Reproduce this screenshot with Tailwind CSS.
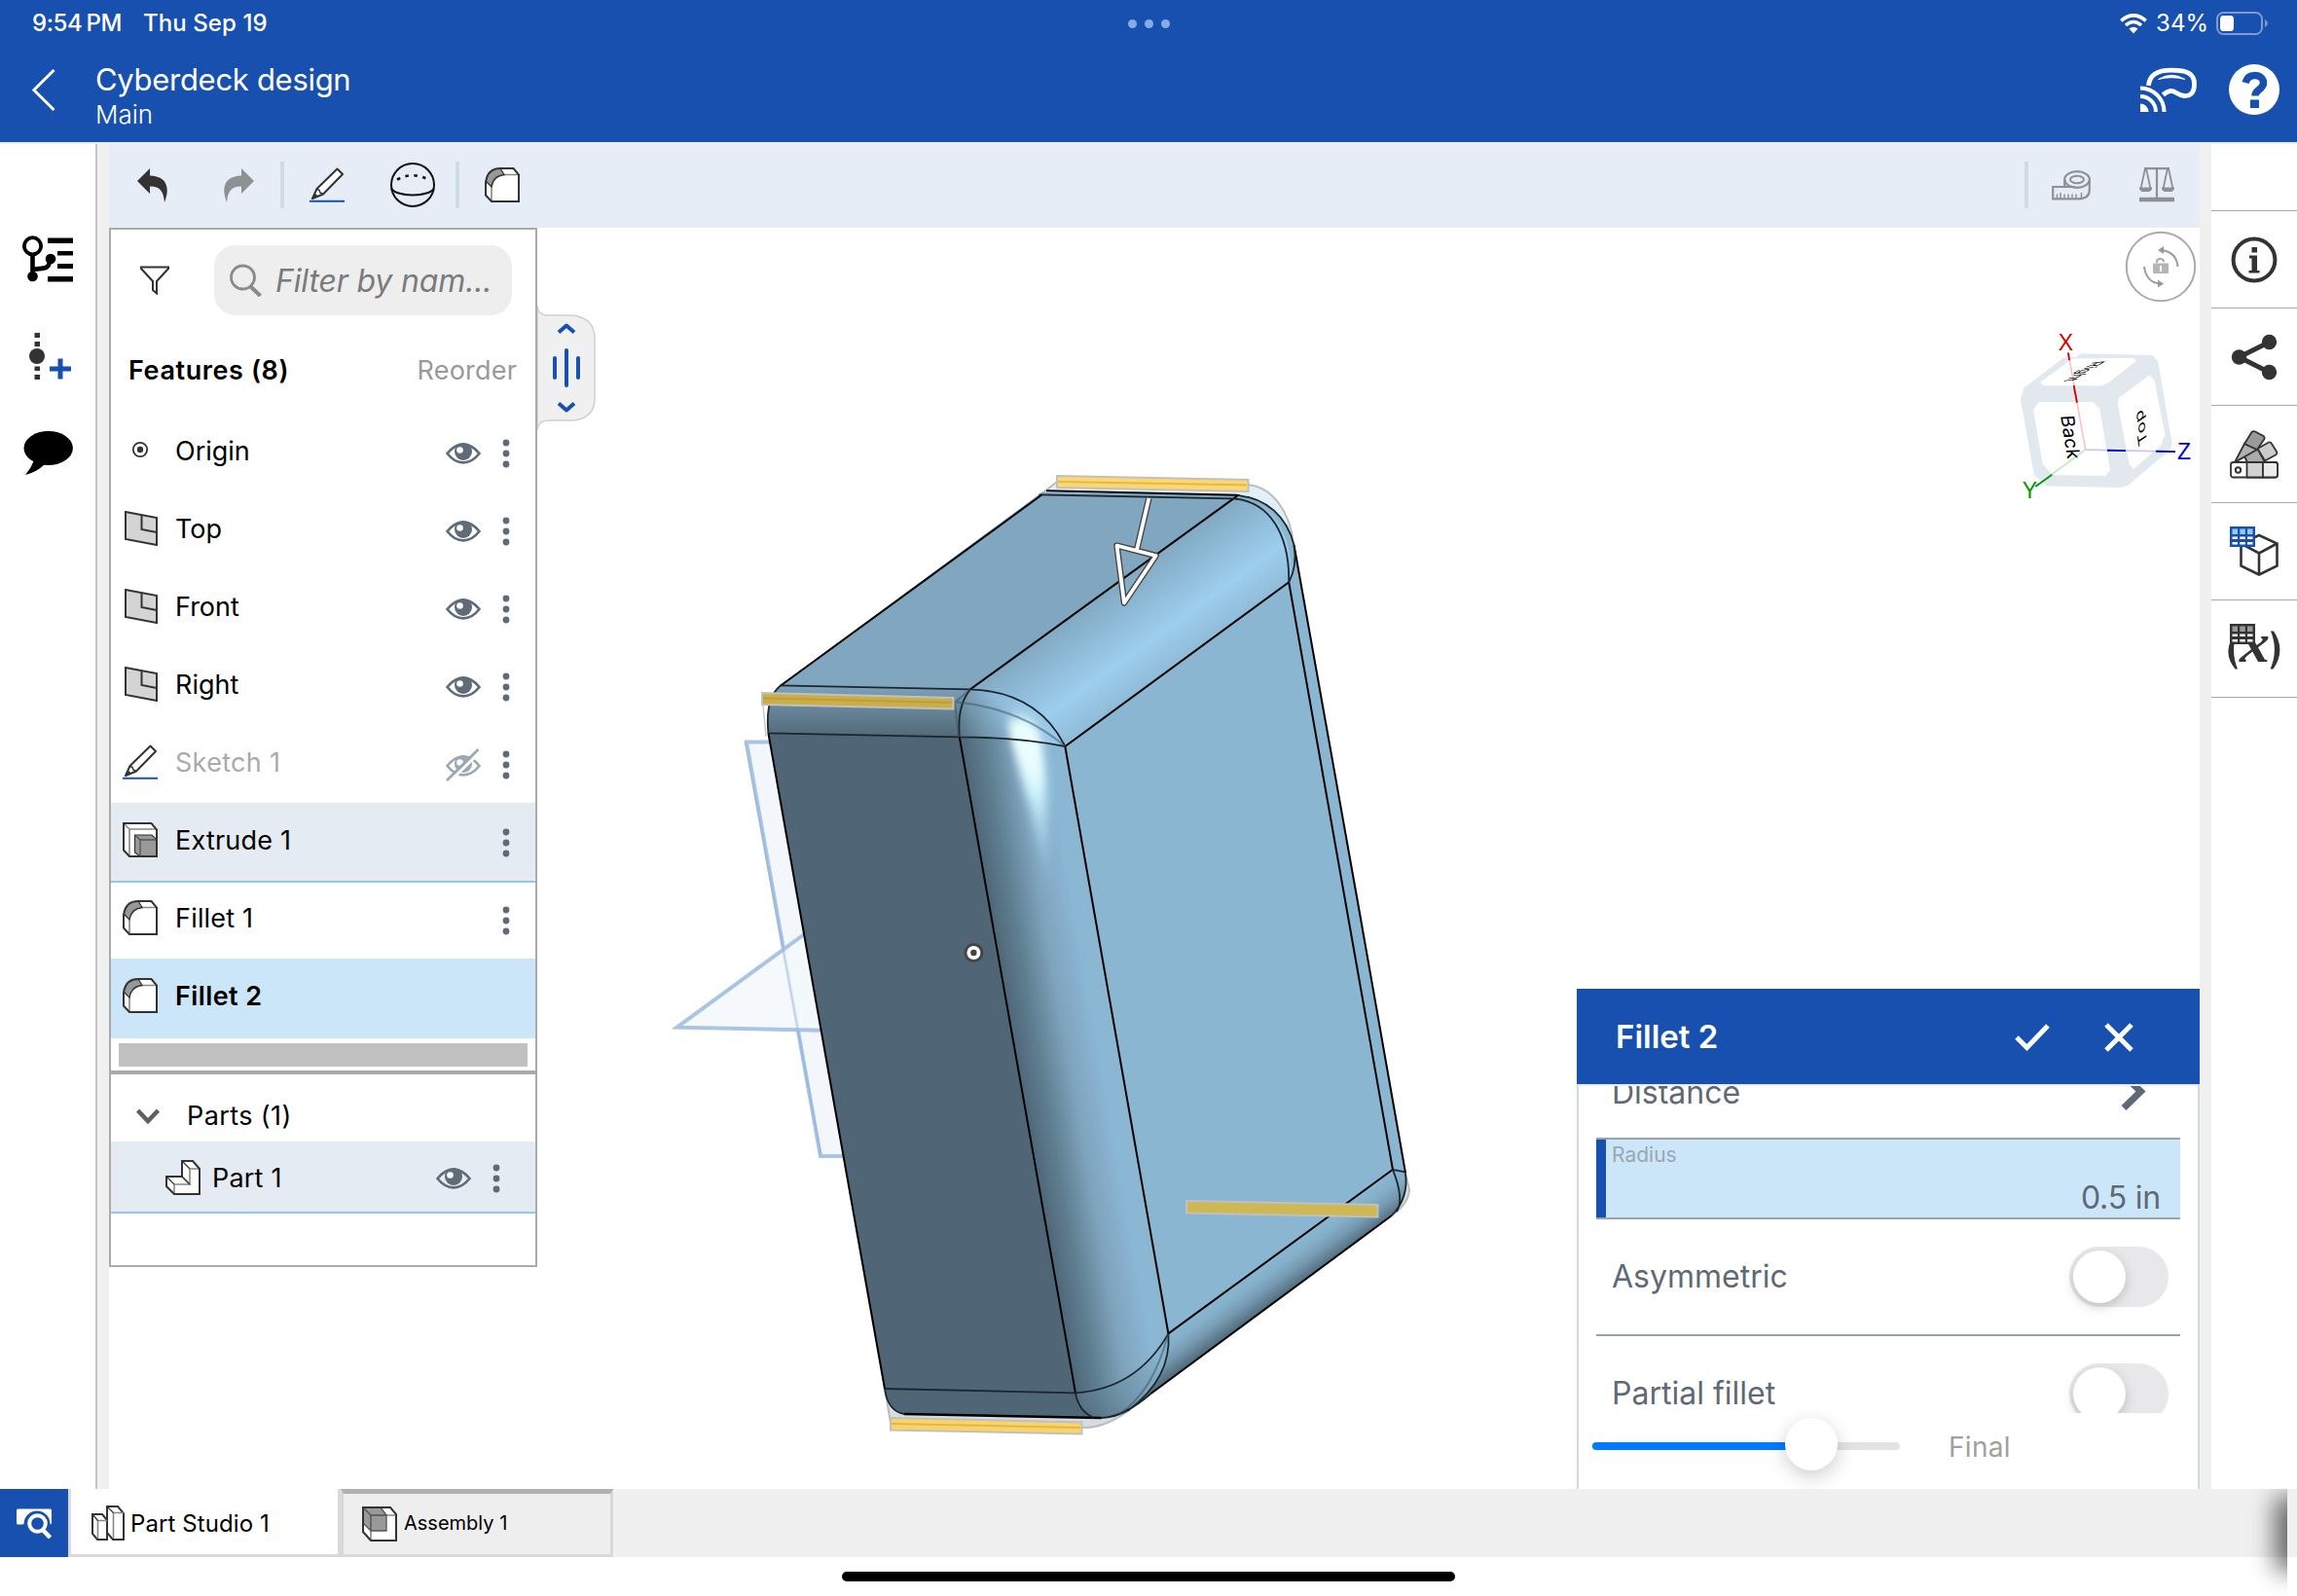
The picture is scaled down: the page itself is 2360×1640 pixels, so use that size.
<!DOCTYPE html>
<html lang="en">
<head>
<meta charset="utf-8">
<title>Cyberdeck design</title>
<script src="https://cdn.jsdelivr.net/npm/@tailwindcss/browser@4"></script>
</head>
<body class="w-[2360px] h-[1640px] overflow-hidden bg-white text-black font-['Inter',sans-serif]">
<svg class="hidden">
  <defs>
    <symbol id="eye" viewBox="0 0 36 22"><path d="M1.5 11Q9 1.6 18 1.6T34.500 11Q27 20.400 18 20.400T1.500 11Z" fill="none" stroke="#606b78" stroke-width="2.600"/><circle cx="18" cy="9" r="9" fill="#606b78"/><ellipse cx="14.500" cy="7.500" rx="3.300" ry="3.300" fill="#fff"/></symbol>
    <symbol id="eyeoff" viewBox="0 0 36 34"><g fill="none" stroke="#9aa8b4"><path d="M1.500 18Q9 8.500 18 8.500T34.500 18Q27 27.400 18 27.400T1.500 18Z" stroke-width="2.600"/><circle cx="18" cy="16" r="9" fill="#9aa8b4" stroke="none"/><circle cx="14.500" cy="14.500" r="3.300" fill="#fff" stroke="none"/><path d="M4 34L36 3" stroke="#fff" stroke-width="3"/><path d="M1 33L33.500 1" stroke-width="2.600"/></g></symbol>
    <symbol id="dots" viewBox="0 0 8 30"><g fill="#606b78"><circle cx="4" cy="4" r="3.400"/><circle cx="4" cy="15" r="3.400"/><circle cx="4" cy="26" r="3.400"/></g></symbol>
    <symbol id="plane" viewBox="0 0 36 36"><path d="M1 1L33 7V35L1 29Z" fill="#d4d4d4" stroke="#333" stroke-width="2"/><path d="M17.500 4V19L33 22" fill="none" stroke="#333" stroke-width="2"/></symbol>
    <symbol id="pencil" viewBox="0 0 36 36"><path d="M3 32L7.500 22L28.500 1.500L34 7L14 27.500Z" fill="#fff" stroke="#333" stroke-width="2" stroke-linejoin="round"/><path d="M7.500 22L10 23.500L11 26L14 27.500" fill="none" stroke="#333" stroke-width="1.500"/><path d="M3 32L5.500 26.500L9 29.500Z" fill="#333"/><path d="M0 34.700H36" stroke="#1850af" stroke-width="2"/></symbol>
    <symbol id="fillet" viewBox="0 0 36 36"><path d="M1 15Q3 1 16 1H29.500L35 7.500V35H7L1 28.500Z" fill="#fff"/><path d="M1 15Q3 1 16 1L20 7.500Q9 9 7 20Z" fill="#999"/><path d="M7 35V20Q8 7.500 20 7.500H35" fill="none" stroke="#888" stroke-width="1.600"/><path d="M16 1L20 7.500Q9 9 7 20L1 14" fill="none" stroke="#333" stroke-width="1.300"/><path d="M1 15Q3 1 16 1H29.500L35 7.500V35H7L1 28.500Z" fill="none" stroke="#333" stroke-width="2"/></symbol>
    <symbol id="extrude" viewBox="0 0 36 36"><path d="M1 1H29.500L35 7.500V35H7L1 28.500Z" fill="#fff"/><path d="M7 35V7H35M1 1L7 7" fill="none" stroke="#888" stroke-width="1.600"/><path d="M12.500 13H30L35 18V35H18L12.500 31Z" fill="#999" stroke="#333" stroke-width="1.200"/><path d="M12.500 13L18 18H34M18 18V34" fill="none" stroke="#555" stroke-width="1.300"/><path d="M1 1H29.500L35 7.500V35H7L1 28.500Z" fill="none" stroke="#333" stroke-width="2"/></symbol>
    <symbol id="assembly" viewBox="0 0 36 36"><path d="M1 1H29L35 8V35H9L1 26Z" fill="#fff"/><path d="M1 1H19L25 9V25H9L1 17Z" fill="#999"/><path d="M9 35V9H35" fill="none" stroke="#888" stroke-width="1.600"/><path d="M1 1L9 9H25V25H9V9M19 1L25 9M1 17L9 25" fill="none" stroke="#555" stroke-width="1.300"/><path d="M1 1H29L35 8V35H9L1 26Z" fill="none" stroke="#333" stroke-width="2"/></symbol>
    <symbol id="part" viewBox="0 0 36 36"><path d="M17 1H28L35 9V35H9L1 27V17H17Z" fill="#fff"/><path d="M25 9H35M25 9V25H9V35M9 25H25L17 17" fill="none" stroke="#888" stroke-width="1.600"/><path d="M17 1L25 9M1 17L9 25M17 17L25 25" fill="none" stroke="#333" stroke-width="1.200"/><path d="M17 1H28L35 9V35H9L1 27V17H17Z" fill="none" stroke="#333" stroke-width="2"/></symbol>
    <symbol id="studio" viewBox="0 0 34 36"><g fill="#fff" stroke="#333" stroke-width="2"><path d="M1 9H11L16 15V35H6L1 29Z"/><path d="M16 1H27L33 8V35H22L16 28Z"/></g><path d="M6.500 34V15.500H16M22.500 34V7.500H33" fill="none" stroke="#888" stroke-width="1.600"/><path d="M16 1L22.500 7.500M1 9L6.500 15.500" stroke="#333" stroke-width="1.200"/></symbol>
  </defs>
</svg>

<div class="flex flex-col w-[2360px] h-[1640px]">
  <!-- header -->
  <header class="h-[146px] shrink-0 bg-[#1750ae] text-white">
    <div class="relative flex items-center justify-between h-[48px] pl-[33px] pr-[29px] text-[24px] font-medium">
      <div class="flex gap-[22px]"><span class="tracking-[-0.4px]">9:54<span class="ml-[4px]">PM</span></span><span class="tracking-[0.1px]">Thu Sep 19</span></div>
      <div class="absolute left-[1159px] flex gap-[8px]"><i class="size-[9px] rounded-full bg-[#86abe6]"></i><i class="size-[9px] rounded-full bg-[#86abe6]"></i><i class="size-[9px] rounded-full bg-[#86abe6]"></i></div>
      <div class="flex items-center">
        <svg class="w-[28px] h-[21px]" viewBox="0 0 28 21" fill="none" stroke="#fff" stroke-width="3.600"><path d="M1.300 7.300Q14 -3.700 26.700 7.300"/><path d="M6 12Q14 5 22 12"/><path d="M14 20.500L9.500 15.500Q14 12 18.500 15.500Z" fill="#fff" stroke="none"/></svg>
        <span class="ml-[9px] w-[53px] whitespace-nowrap font-normal tracking-[0.1px]">34%</span>
        <svg class="ml-[9px] w-[54px] h-[24px]" viewBox="0 0 54 24"><rect x="1" y="1" width="46" height="22" rx="6.500" fill="none" stroke="#7a9bd3" stroke-width="2"/><rect x="4" y="4" width="14" height="16" rx="3.500" fill="#fff"/><path d="M50 8Q56 12 50 16Z" fill="#7a9bd3"/></svg>
      </div>
    </div>
    <div class="flex items-start h-[98px] pl-[33px] pr-[18px] pt-[18px]">
      <svg class="mt-[5px] w-[24px] h-[43px]" viewBox="0 0 24 43" fill="none" stroke="#fff" stroke-width="3"><path d="M22.500 1L1.800 21.500L22.500 42"/></svg>
      <div class="ml-[41px] grow -mt-[4px]">
        <div class="text-[31px] leading-[40px] tracking-[-0.3px]">Cyberdeck design</div>
        <div class="text-[26px] leading-[32px] font-light">Main</div>
      </div>
      <svg class="mt-[3px] mr-[-1px] w-[60px] h-[48px]" viewBox="0 0 60 48" fill="none" stroke="#fff"><path d="M8.500 19C9.500 8 17 3.200 32 3.200C49 3.200 55.500 7 55.500 17C55.500 26 52 30 45 29.500C38 29 36 24 31 24.500C27 25 26.500 26 23.500 28.500" stroke-width="4.800"/><path d="M18.500 12.500Q32 4 46 12.500Q32 9 18.500 12.500Z" fill="#fff" stroke-width=".8"/><path d="M0 21.500A24.500 24.500 0 0 1 24.500 46M0 30A16 16 0 0 1 16 46" stroke-width="4"/><path d="M0 37.500A8.500 8.500 0 0 1 8.500 46H0Z" fill="#fff" stroke="none"/></svg>
      <svg class="ml-[32px] w-[52px] h-[52px]" viewBox="0 0 52 52"><circle cx="26" cy="26" r="26" fill="#fff"/><path d="M17 19C18.500 14 22 11.500 26.500 11.500C32 11.500 35.500 15 35.500 19C35.500 23 33 24.500 30 27C28 28.700 27 29.500 27 32.500" fill="none" stroke="#1750ae" stroke-width="7.500"/><rect x="22" y="36.500" width="9" height="8.500" fill="#1750ae"/></svg>
    </div>
  </header>

  <!-- workspace -->
  <main class="flex h-[1384px] shrink-0 border-t-2 border-[#e6edf7]">
    <nav class="w-[100px] shrink-0 border-r-2 border-[#c4c4c4] flex flex-col items-start pt-[94px]">
      <svg class="ml-[23px] w-[52px] h-[48px]" viewBox="0 0 52 48"><circle cx="10.500" cy="10.800" r="8.600" fill="none" stroke="#000" stroke-width="3.800"/><path d="M10.500 19V42M10.500 35C20 33 28 36 28 25" fill="none" stroke="#000" stroke-width="4.600"/><circle cx="10.500" cy="42" r="5.300"/><circle cx="29" cy="24" r="5.300"/><path d="M26 2.500h26v5.500h-26zM36 16h16v4.500h-16zM36 29h16v5h-16zM26 42h26v5.500h-26z"/></svg>
      <svg class="ml-[30px] mt-[52px] w-[44px] h-[48px]" viewBox="0 0 44 48"><path d="M5.500 0h5.500v5h-5.500zM5.500 9h5.500v5h-5.500zM5.500 34.500h5.500v4.500h-5.500zM5.500 43h5.500v5h-5.500z" fill="#333"/><circle cx="8" cy="24" r="8" fill="#333"/><path d="M21 37H43M32 26.500V47.500" stroke="#1850af" stroke-width="5"/></svg>
      <svg class="ml-[24px] mt-[53px] w-[52px] h-[46px]" viewBox="0 0 52 46"><ellipse cx="25.700" cy="17.500" rx="25.200" ry="17.500"/><path d="M11 30Q8 38 2 45Q14 42 22 34Z"/></svg>
    </nav>
    <div class="w-[12px] shrink-0 bg-[#f0f0f0]"></div>

    <section class="w-[2148px] shrink-0 flex flex-col">
      <!-- toolbar -->
      <div class="h-[86px] shrink-0 bg-[#e6edf7] flex items-center pl-[29px] pb-[2px]">
        <svg class="w-[32px] h-[36px]" viewBox="0 0 32 36"><path d="M0 14L13 1V8.500C28 9 35 18 28 36C27 25 24 19.500 13 19.500V27Z" fill="#333"/></svg>
        <svg class="ml-[56px] w-[32px] h-[36px]" viewBox="0 0 32 36"><path d="M32 14L19 1V8.500C4 9 -3 18 4 36C5 25 8 19.500 19 19.500V27Z" fill="#8e9194"/></svg>
        <i class="ml-[27px] w-[4px] h-[48px] bg-[#cddbe4]"></i>
        <svg class="ml-[26px] w-[36px] h-[36px]"><use href="#pencil"/></svg>
        <svg class="ml-[47px] w-[46px] h-[46px]" viewBox="0 0 46 46" fill="none" stroke="#111" stroke-width="2"><circle cx="23" cy="23" r="22"/><path d="M1.500 27C7 35.500 39 35.500 44.500 27"/><path d="M7 17.500Q23 9 39 17.500" stroke-width="2.600" stroke-dasharray="3.500 5.500"/></svg>
        <i class="ml-[21px] w-[4px] h-[48px] bg-[#cddbe4]"></i>
        <svg class="ml-[26px] w-[36px] h-[36px]"><use href="#fillet"/></svg>
        <i class="ml-auto w-[4px] h-[48px] bg-[#cddbe4]"></i>
        <svg class="ml-[24px] w-[40px] h-[31px]" viewBox="0 0 40 31" fill="none" stroke="#8e9194" stroke-width="2.200"><ellipse cx="26" cy="9.500" rx="12.800" ry="8.300"/><ellipse cx="26" cy="9.500" rx="7" ry="3.800" stroke-width="2"/><path d="M13.200 10V17H1.200V29.300H28Q38.800 29 38.800 20V10M13.200 17H24"/><path d="M5.500 29V24.500M9 29V23M13 29V24.500M17 29V24.500M21 29V24.500M25 29V24.500M30.500 29V23" stroke-width="1.500"/></svg>
        <svg class="ml-[50px] mr-[26px] w-[36px] h-[36px]" viewBox="0 0 36 36" fill="none" stroke="#8e9194"><path d="M5 1.200H31M18 1V32" stroke-width="2.200"/><path d="M6 1L1.500 22H11.500L7 1M29 1L24.500 22H34.500L30 1" stroke-width="1.800"/><path d="M0 20.500H13V22.500L10.500 25H2.500L0 22.500ZM23 20.500H36V22.500L33.500 25H25.500L23 22.500Z" fill="#8e9194" stroke="none"/><path d="M0 33H36" stroke-width="4.600"/></svg>
      </div>

      <!-- graphics area -->
      <div class="relative h-[1296px]">
        <svg class="absolute inset-0 w-[2148px] h-[1296px]" viewBox="112 234 2148 1296">
          <defs>
            <linearGradient id="gTop" gradientUnits="userSpaceOnUse" x1="997" y1="708.300" x2="1058.500" y2="793"><stop offset="0" stop-color="#82a9c2"/><stop offset=".3" stop-color="#8ebad6"/><stop offset=".65" stop-color="#9cceed"/><stop offset="1" stop-color="#8fbbd7"/></linearGradient>
            <linearGradient id="gFront" gradientUnits="userSpaceOnUse" x1="985.800" y1="757.300" x2="1089.400" y2="739"><stop offset="0" stop-color="#4f6778"/><stop offset=".22" stop-color="#5e7e90"/><stop offset=".5" stop-color="#7ea3bc"/><stop offset=".68" stop-color="#86aecb"/><stop offset=".82" stop-color="#8ab8d4"/><stop offset="1" stop-color="#8cb6d2"/></linearGradient>
            <linearGradient id="gBot" gradientUnits="userSpaceOnUse" x1="1300" y1="1297" x2="1323" y2="1329"><stop offset="0" stop-color="#8bb6d1"/><stop offset=".3" stop-color="#84afc9"/><stop offset=".6" stop-color="#7699b1"/><stop offset="1" stop-color="#516b7b"/></linearGradient>
            <linearGradient id="gTL" x1="0" y1="0" x2="0" y2="1"><stop offset="0" stop-color="#7fa4bd"/><stop offset=".4" stop-color="#69889d"/><stop offset="1" stop-color="#526979"/></linearGradient>
            <linearGradient id="gCorner" gradientUnits="userSpaceOnUse" x1="980" y1="758" x2="1052" y2="715"><stop offset="0" stop-color="#4f6778"/><stop offset=".35" stop-color="#7395aa"/><stop offset=".7" stop-color="#8ebbd9"/><stop offset="1" stop-color="#98c9e7"/></linearGradient>
            <linearGradient id="gBC" gradientUnits="userSpaceOnUse" x1="1105" y1="1455" x2="1190" y2="1395"><stop offset="0" stop-color="#4f6778"/><stop offset=".5" stop-color="#6f93a8"/><stop offset="1" stop-color="#87b2cd"/></linearGradient>
            <linearGradient id="gShine" gradientUnits="userSpaceOnUse" x1="1040" y1="720" x2="1075" y2="930"><stop offset="0" stop-color="#d9ffff" stop-opacity="0"/><stop offset=".18" stop-color="#f2ffff" stop-opacity="1"/><stop offset=".45" stop-color="#d2f7ff" stop-opacity=".95"/><stop offset=".7" stop-color="#b0dcf5" stop-opacity=".5"/><stop offset="1" stop-color="#98c4e0" stop-opacity="0"/></linearGradient>
            <filter id="soft" x="-1" y="-.3" width="3" height="1.600"><feGaussianBlur stdDeviation="5"/></filter>
            <clipPath id="cFront"><path d="M997 708.300C1040 710 1075 728 1094.300 767L1200.400 1370L1105 1432L985.800 757Z"/></clipPath>
          </defs>
          <!-- construction planes -->
          <g fill="#f3f7fb" stroke="#a9c5e3" stroke-width="4"><path d="M800 762.500H767L843 1188H880"/><path d="M840 950L695.500 1055.700L880 1059.500" fill-opacity=".8"/></g>
          <path d="M765.500 762.500L843.500 1188" stroke="#86a9d4" stroke-opacity=".4" stroke-width="2"/>
          <!-- original body behind the fillet -->
          <path d="M1068 509L1086 495L1282.700 498.300C1306 500 1326 525 1329 560L1280 520Z" fill="#e3eff7" stroke="#bdbdbd" stroke-width="2"/>
          <path d="M909 1427L915 1462L1111 1467C1130 1468 1150 1458 1165 1445L1100 1440Z" fill="#d6dcdf" stroke="#bdbdbd" stroke-width="2"/>
          <path d="M1440 1190L1448 1222Q1448 1236 1430 1249" fill="#d6dcdf" stroke="#bdbdbd" stroke-width="2"/>
          <path d="M800 706L784 725L787 757" fill="none" stroke="#c8c8c8" stroke-width="1.500"/>
          <!-- faces -->
          <path d="M1070.600 506L1273.800 509.300C1300 512 1320 528 1329.500 560L1397.300 940L1445 1211C1445 1232 1440 1240 1430 1249L1182.500 1432C1165 1448 1148 1457 1131.500 1457L929 1453C917 1450 912 1443 909 1427L789.400 753.300Q785 722 801.400 704.500Z" fill="#8bb6d2"/>
          <path d="M1070.600 506L1271.500 509.300L997 708.300L801.400 704.300Z" fill="#80a6c0"/>
          <path d="M1271.500 509.300C1300 512 1324 535 1328 590L1324.200 598.300L1094.300 767C1080 730 1045 710 997 708.300Z" fill="url(#gTop)"/>
          <path d="M789.400 753.300L985.800 757.300L1105 1431.400L909 1427Z" fill="#506676"/>
          <path d="M801.400 704.300L997 708.300Q982 728 985.800 757.300L789.400 753.300Q785 722 801.400 704.300Z" fill="url(#gTL)"/>
          <path d="M909 1427L1105 1431.400Q1108 1450 1124 1457L929 1453Q913 1450 909 1427Z" fill="#4f6677"/>
          <path d="M985.800 757.300Q1060 759 1094.300 767L1200.400 1370.400C1180 1415 1140 1430 1105 1431.400Z" fill="url(#gFront)"/>
          <path d="M997 708.300C1045 710 1080 730 1094.300 767Q1060 759 985.800 757.300Q983 728 997 708.300Z" fill="url(#gCorner)"/>
          <path d="M1431 1201.800L1200.400 1370.400C1199 1405 1185 1430 1159.600 1449L1182.500 1432L1430 1249C1442 1240 1445 1225 1443.800 1204.300Z" fill="url(#gBot)"/>
          <path d="M1105 1431.400C1150 1429 1185 1405 1200.400 1370.400C1203 1405 1180 1440 1150 1453Q1135 1458 1124 1457Q1108 1450 1105 1431.400Z" fill="url(#gBC)"/>
          <path d="M1036 735Q1052 722 1064 745Q1074 765 1076 830L1080 930L1058 830Q1040 770 1036 735Z" fill="url(#gShine)" filter="url(#soft)" clip-path="url(#cFront)"/>
          <path d="M1038 745Q1050 734 1060 750Q1067 770 1068 810Q1054 790 1038 745Z" fill="#eaffff" fill-opacity=".9" filter="url(#soft)"/>
          <!-- edges -->
          <g fill="none" stroke="#000" stroke-width="2" stroke-linejoin="round">
            <path d="M1070.600 508.300L801.400 705M789.400 753.300L909 1427"/>
            <path d="M1271.500 509.300L997 708.300M1324.200 598.300L1094.300 767L1200.400 1370.400L1431 1201.800L1324.200 598.300"/>
            <path d="M985.800 757.300L1105 1431.400M1329.500 560L1397.300 940L1444 1205M1430 1249L1182.500 1432"/>
            <path d="M1075 504.300L1273.800 508.800"/>
            <path d="M929 1453L1131.500 1457" stroke-width="2.400"/>
          </g>
          <g fill="none" stroke="#1b262c" stroke-width="1.800" stroke-linejoin="round">
            <path d="M1067.500 508.300L1264.800 512.300C1305 514 1325 550 1324.200 598.300"/>
            <path d="M1273.800 509.300C1300 512 1322 530 1329.500 560Q1333 582 1324.200 598.300"/>
            <path d="M801.400 704.300L997 708.300C1040 710 1075 728 1094.300 767"/>
            <path d="M801.400 705Q786 718 789.400 753.300L985.800 757.300Q1050 758 1094.300 767M997 708.300Q983 725 985.800 757.300"/>
            <path d="M909 1427L1105 1431.400C1140 1429 1175 1415 1200.400 1370.400"/>
            <path d="M909 1427Q912 1450 929 1453M1105 1431.400Q1108 1450 1124 1457"/>
            <path d="M1200.400 1370.400C1203 1405 1185 1430 1159.600 1449Q1145 1457 1131.500 1457Q1155 1456 1182.500 1432"/>
            <path d="M1431 1201.800L1443.800 1204.300Q1448 1230 1430 1249M1431 1201.800Q1443 1232 1435 1245"/>
          </g>
          <path d="M980 721Q1050 728 1094 767M997 708L981 722L985 757M1200 1371Q1185 1430 1150 1453" fill="none" stroke="#36515f" stroke-opacity=".5" stroke-width="2"/>
          <!-- highlighted edges -->
          <g stroke="#c0c0c0" stroke-width="2">
            <path d="M1086 489L1282.500 493V505L1086 501Z" fill="#ffd76b"/>
            <path d="M783 712L979.500 717V728.500L783 724Z" fill="#cbae45"/>
            <path d="M1219 1234L1415.500 1238V1250.500L1219 1246.500Z" fill="#cdb854"/>
            <path d="M915 1457L1111.500 1461.500V1473.500L915 1469.500Z" fill="#fcd466"/>
          </g>
          <g stroke="#a08430" stroke-opacity=".35" stroke-width="2"><path d="M1087 495L1281 498.500M784 717.500L978 722M916 1463L1110 1467"/></g>
          <!-- direction handle -->
          <g fill="none" stroke-linejoin="round"><path d="M1180.400 512L1168 565M1147.500 560.700L1187.600 571L1155 619.500Z" stroke="#444" stroke-width="6.500"/><path d="M1180.400 512L1168 565M1147.500 560.700L1187.600 571L1155 619.500Z" stroke="#fff" stroke-width="3.800"/></g>
          <circle cx="1000.400" cy="979" r="10" fill="#444"/><circle cx="1000.400" cy="979" r="7" fill="#fff"/><circle cx="1000.400" cy="979" r="3.200" fill="#444"/>
          <!-- view cube -->
          <g transform="translate(2020 0) scale(.3333 .338)">
            <path d="M178 1180L300 1088L340 1085L352 1075L575 1080L592 1100L635 1350L628 1368L500 1475L480 1482L250 1478L210 1445L168 1215Z" fill="#e1e8ee"/>
            <g fill="#fff"><path d="M228 1163L328 1090L515 1089L525 1097L440 1163L418 1173L240 1172Z"/><path d="M225 1222H390L412 1243L444 1430L430 1447L265 1444L236 1410L207 1245Z"/><path d="M470 1210L565 1140L580 1155L613 1320L600 1355L515 1427L503 1410L468 1230Z"/></g>
            <g fill="none" stroke-width="5"><path d="M315 1072L368 1367" stroke="#f5c6c6"/><path d="M368 1367L645 1373" stroke="#cac7f5"/><path d="M368 1367L214 1479" stroke="#c3e9c3"/></g>
            <g fill="none" stroke-width="5.500"><path d="M315 1072L318 1095M332 1172L342 1224" stroke="#d40000"/><path d="M435 1369L492 1370M585 1372L645 1373" stroke="#0000d4"/><path d="M265 1443L214 1479" stroke="#009a00"/></g>
          </g>
          <g font-family="Inter" font-size="19" fill="#000">
            <text transform="matrix(.16 1 -1 .04 2117 427)" textLength="45">Back</text>
            <text transform="matrix(-.14 -.98 .62 -.42 2206 454)" textLength="35">Top</text>
            <text transform="matrix(-.76 .5 -1.05 .12 2151 372)" font-size="17">Right</text>
          </g>
          <g font-family="Liberation Sans" font-size="23" text-anchor="middle"><text x="2122.500" y="359.500" fill="#d40000">X</text><text x="2244" y="472" fill="#0000d4">Z</text><text x="2085.500" y="512" fill="#009a00">Y</text></g>
          <!-- rotation lock -->
          <g fill="none" stroke="#aaa" stroke-width="2"><circle cx="2220" cy="274" r="35.200" fill="#fff"/><path d="M2237.500 274Q2236 259 2221 257M2203 274Q2205 290 2219 291.500" stroke="#999"/><path d="M2217 257L2223 253V261ZM2223 291.500L2217 287.500V295.500Z" fill="#999" stroke="none"/><rect x="2212" y="270.500" width="16" height="10.500" rx="1" fill="#b5b5b5" stroke="none"/><path d="M2216 270V269Q2216 266 2219.500 266Q2223 266 2223 269"/><path d="M2220 273V279" stroke="#fff"/></g>
        </svg>

        <!-- feature list -->
        <aside class="absolute left-0 top-0 w-[440px] h-[1068px] bg-white border-2 border-[#aaa] flex flex-col">
          <div class="flex items-center h-[104px] shrink-0 pl-[30px] pr-[24px]">
            <svg class="w-[30px] h-[30px]" viewBox="0 0 30 30" fill="none" stroke="#333" stroke-width="2"><path d="M1 1.500H29V3L17 16V28.500L13 25V16L1 3Z"/></svg>
            <div class="ml-auto flex items-center w-[306px] h-[72px] rounded-[22px] bg-[#eeeeee] pl-[16px]">
              <svg class="w-[33px] h-[34px]" viewBox="0 0 33 34" fill="none" stroke="#888a8c" stroke-width="2.800"><circle cx="13.500" cy="14" r="12"/><path d="M21 23L31.500 33" stroke-width="4"/></svg>
              <span class="ml-[14px] mt-px text-[32px] italic text-[#7b7b7b] whitespace-nowrap tracking-[-0.15px]">Filter by nam...</span>
            </div>
          </div>
          <div class="flex items-center justify-between h-[85px] pb-[2px] shrink-0 pl-[18px] pr-[19px] text-[27px]"><span class="font-semibold tracking-[0.6px]">Features (8)</span><span class="text-[#999] tracking-[0.2px]">Reorder</span></div>
          <div class="flex flex-col text-[27px]">
            <div class="flex items-center h-[80px] pb-[4px] pl-[12px] pr-[26px]"><svg class="w-[36px] h-[36px]" viewBox="0 0 36 36"><circle cx="18" cy="17" r="7.200" fill="none" stroke="#333" stroke-width="1.800"/><circle cx="18" cy="17" r="3.200" fill="#333"/></svg><span class="ml-[18px] mt-[2px] grow">Origin</span><svg class="mt-[5px] w-[36px] h-[22px]"><use href="#eye"/></svg><svg class="mt-[5px] ml-[22px] w-[8px] h-[30px]"><use href="#dots"/></svg></div>
            <div class="flex items-center h-[80px] pb-[4px] pl-[14px] pr-[26px]"><svg class="-mt-px w-[36px] h-[36px]"><use href="#plane"/></svg><span class="ml-[16px] mt-[2px] grow">Top</span><svg class="mt-[5px] w-[36px] h-[22px]"><use href="#eye"/></svg><svg class="mt-[5px] ml-[22px] w-[8px] h-[30px]"><use href="#dots"/></svg></div>
            <div class="flex items-center h-[80px] pb-[4px] pl-[14px] pr-[26px]"><svg class="-mt-px w-[36px] h-[36px]"><use href="#plane"/></svg><span class="ml-[16px] mt-[2px] grow">Front</span><svg class="mt-[5px] w-[36px] h-[22px]"><use href="#eye"/></svg><svg class="mt-[5px] ml-[22px] w-[8px] h-[30px]"><use href="#dots"/></svg></div>
            <div class="flex items-center h-[80px] pb-[4px] pl-[14px] pr-[26px]"><svg class="-mt-px w-[36px] h-[36px]"><use href="#plane"/></svg><span class="ml-[16px] mt-[2px] grow">Right</span><svg class="mt-[5px] w-[36px] h-[22px]"><use href="#eye"/></svg><svg class="mt-[5px] ml-[22px] w-[8px] h-[30px]"><use href="#dots"/></svg></div>
            <div class="flex items-center h-[80px] pb-[4px] pl-[12px] pr-[26px]"><svg class="-mt-px w-[36px] h-[36px]"><use href="#pencil"/></svg><span class="ml-[18px] mt-[2px] grow text-[#aaa] tracking-[0.3px]">Sketch 1</span><svg class="mt-[5px] w-[36px] h-[34px]"><use href="#eyeoff"/></svg><svg class="mt-[5px] ml-[22px] w-[8px] h-[30px]"><use href="#dots"/></svg></div>
            <div class="flex items-center h-[82px] pb-[4px] pl-[12px] pr-[26px] bg-[#e4ebf2] border-b-2 border-[#8dcbf0]"><svg class="-mt-px w-[36px] h-[36px]"><use href="#extrude"/></svg><span class="ml-[18px] mt-[2px] grow tracking-[0.2px]">Extrude 1</span><svg class="mt-[5px] w-[8px] h-[30px]"><use href="#dots"/></svg></div>
            <div class="flex items-center h-[78px] pb-[4px] pl-[12px] pr-[26px]"><svg class="-mt-[3px] w-[36px] h-[36px]"><use href="#fillet"/></svg><span class="ml-[18px] grow tracking-[0.2px]">Fillet 1</span><svg class="mt-[3px] w-[8px] h-[30px]"><use href="#dots"/></svg></div>
            <div class="flex items-center h-[82px] pb-[6px] pl-[12px] pr-[26px] bg-[#cce6f9]"><svg class="-mt-px w-[36px] h-[36px]"><use href="#fillet"/></svg><span class="ml-[18px] mt-[2px] grow font-semibold tracking-[0.4px]">Fillet 2</span></div>
          </div>
          <div class="mt-[5px] ml-[8px] w-[420px] h-[24px] shrink-0 bg-[#c1c1c1]"></div>
          <div class="mt-[4px] h-[4px] shrink-0 bg-[#aaa]"></div>
          <div class="flex items-center h-[69px] pt-[16px] pl-[26px] shrink-0 text-[27px]"><svg class="w-[24px] h-[16px]" viewBox="0 0 24 16" fill="none" stroke="#606060" stroke-width="4.500"><path d="M1.500 2L12 13L22.500 2"/></svg><span class="ml-[28px] mt-[2px] tracking-[0.4px]">Parts (1)</span></div>
          <div class="flex items-center h-[74px] shrink-0 pl-[56px] pr-[36px] text-[27px] bg-[#e4ebf2] border-b-2 border-[#8dcbf0]"><svg class="mt-[2px] w-[36px] h-[36px]"><use href="#part"/></svg><span class="ml-[12px] grow mt-[5px] tracking-[0.2px]">Part 1</span><svg class="mt-[3px] w-[36px] h-[22px]"><use href="#eye"/></svg><svg class="mt-[3px] ml-[22px] w-[8px] h-[30px]"><use href="#dots"/></svg></div>
        </aside>
        <svg class="absolute left-[440px] top-[78px] w-[62px] h-[134px]" viewBox="0 0 62 134"><path d="M0 2Q1 12 10 12H35Q59 14 59 36V97Q59 119 35 120H12Q1 120 0 130Z" fill="#f0f0f0" stroke="#d0d0d0" stroke-width="1.500"/><g fill="none" stroke="#1850af" stroke-width="4" stroke-linecap="round"><path d="M22 29.500L30 22.500L38 29.500M22 102.500L30 109.500L38 102.500" stroke-linecap="butt" stroke-linejoin="round"/><path d="M18 56V76M30 48V84M42 56V76"/></g></svg>

        <!-- fillet dialog -->
        <div class="absolute left-[1508px] top-[782px] w-[640px] h-[514px] bg-white flex flex-col text-[32px] text-[#5f6976]">
          <div class="flex items-center h-[98px] pt-[2px] shrink-0 bg-[#1750ae] text-white pl-[40px]"><span class="grow font-semibold text-[33px]">Fillet 2</span>
            <svg class="w-[36px] h-[28px]" viewBox="0 0 36 28" fill="none" stroke="#fff" stroke-width="5"><path d="M2 14L12.500 24.500L34 2"/></svg>
            <svg class="ml-[56px] mr-[68px] w-[30px] h-[30px]" viewBox="0 0 30 30" stroke="#fff" stroke-width="5"><path d="M2 2L28 28M28 2L2 28"/></svg>
          </div>
          <div class="h-[416px] border-x-2 border-[#cddbe8] border-t-2 border-t-[#e6edf7]">
            <div class="h-[336px] overflow-hidden px-[18px]">
              <div class="flex items-start h-[53px] pl-[16px] pr-[35px]"><span class="grow leading-[40px] -mt-[13px]">Distance</span><svg class="-mt-[13px] w-[26px] h-[38px]" viewBox="0 0 26 38" fill="none" stroke="#5f6976" stroke-width="7"><path d="M3 2L20.500 18.500L3 35.500"/></svg></div>
              <div class="h-[84px] bg-[#cce6f9] border-y-2 border-[#97a3af] flex"><i class="w-[10px] bg-[#1850af]"></i><div class="grow pl-[6px] pr-[20px] pt-[4px]"><div class="text-[21px] leading-[24px] text-[#9aa8b4]">Radius</div><div class="text-right leading-[40px] mt-[12px] tracking-[-0.2px]">0.5 in</div></div></div>
              <div class="flex items-center justify-between h-[118px] pl-[16px] pr-[12px]"><span>Asymmetric</span><i class="w-[102px] h-[62px] rounded-full bg-[#e8e8ea] p-[4px]"><b class="block size-[54px] rounded-full bg-white shadow-[0_4px_12px_rgba(0,0,0,0.18)]"></b></i></div>
              <div class="h-[2px] bg-[#97a3af]"></div>
              <div class="flex items-center justify-between h-[118px] pl-[16px] pr-[12px]"><span>Partial fillet</span><i class="w-[102px] h-[62px] rounded-full bg-[#e8e8ea] p-[4px]"><b class="block size-[54px] rounded-full bg-white shadow-[0_4px_12px_rgba(0,0,0,0.18)]"></b></i></div>
            </div>
            <div class="flex items-center h-[68px] pl-[14px]">
              <div class="relative w-[316px] h-[8px] rounded-full bg-[#e3e3e5]"><i class="absolute left-0 top-0 h-[8px] w-[225px] rounded-full bg-[#007aff]"></i><i class="absolute left-[198px] -top-[25px] size-[54px] rounded-full bg-white shadow-[0_6px_20px_rgba(0,0,0,0.2)]"></i></div>
              <span class="ml-[50px] mt-[2px] text-[28px] text-[#a0a0a0] tracking-[0.3px]">Final</span>
            </div>
          </div>
        </div>
      </div>
    </section>

    <div class="w-[12px] shrink-0 bg-[#f0f0f0]"></div>
    <nav class="w-[88px] shrink-0 flex flex-col">
      <div class="h-[69px] border-b border-[#a8a8a8]"></div>
      <div class="flex items-center justify-center h-[100px] border-b border-[#a8a8a8]"><svg class="w-[48px] h-[48px]" viewBox="0 0 48 48"><circle cx="24" cy="24" r="21.400" fill="none" stroke="#333" stroke-width="4"/><path d="M21.500 11h5.500v5.500h-5.500zM19 19.500h8v15.500h2.500v2.500h-11v-2.500h3v-12.500h-2.500z" fill="#333"/></svg></div>
      <div class="flex items-center justify-center h-[100px] border-b border-[#a8a8a8]"><svg class="w-[48px] h-[48px]" viewBox="0 0 48 48"><path d="M39.500 8.500L8.500 24L39.500 39.500" fill="none" stroke="#333" stroke-width="5"/><g fill="#333"><circle cx="39.500" cy="8.500" r="7.700"/><circle cx="8.500" cy="24" r="7.700"/><circle cx="39.500" cy="39.500" r="7.700"/></g></svg></div>
      <div class="flex items-center justify-center h-[100px] border-b border-[#a8a8a8]"><svg class="w-[50px] h-[50px]" viewBox="0 0 50 50" stroke="#333" stroke-width="1.800" stroke-linejoin="round"><path d="M5 33L28.500 19L36 33Z" fill="#fff"/><path d="M14 25L28.500 19L36 33H18Z" fill="#aaa"/><path d="M28.500 19L40 12.500Q42 12 43 14L48 22Q49 24 47 25.500L36 31.500Z" fill="#ccc"/><path d="M5 33L15 14L28 20Z" fill="#b0b0b0"/><path d="M15 14L22.500 2Q24 .5 26 1.500L34.500 6Q36 7.500 35.500 9L28 20Z" fill="#999"/><rect x="1" y="33" width="48" height="15.500" rx="2.500" fill="#fff"/><path d="M17.500 33H34V48.500H17.500Z" fill="#d2d2d2"/><path d="M34 33H46.500Q49 33 49 35.500V46Q49 48.500 46.500 48.500H34Z" fill="#ebebeb"/><circle cx="8.500" cy="41" r="2.700" fill="#fff" stroke-width="2"/></svg></div>
      <div class="flex items-center justify-center h-[100px] border-b border-[#a8a8a8]"><svg class="w-[54px] h-[52px]" viewBox="0 0 54 52"><path d="M32 9L50.500 17.500V40.500L32 49.500L13.500 40.500V17.500ZM13.500 17.500L32 27.500L50.500 17.500M32 27.500V49.500" fill="none" stroke="#333" stroke-width="2.600"/><rect x="2" y="0" width="26" height="21" fill="#1850af"/><path d="M4.500 2.500h5.500v5.500h-5.500zM12.300 2.500h5.500v5.500h-5.500zM20 2.500h5.500v5.500h-5.500z" fill="#8dcbf0"/><path d="M4.500 10.500h5.500v2.500h-5.500zM12.300 10.500h5.500v2.500h-5.500zM20 10.500h5.500v2.500h-5.500zM4.500 16h5.500v2.500h-5.500zM12.300 16h5.500v2.500h-5.500zM20 16h5.500v2.500h-5.500z" fill="#fff"/></svg></div>
      <div class="flex items-center justify-center h-[100px] border-b border-[#a8a8a8]"><svg class="w-[54px] h-[52px] overflow-visible" viewBox="0 0 54 52"><g fill="#333"><path d="M10 7.500Q-8 27 7.500 46.500H10Q2 27 10 7.500ZM44 7.500H47Q60 27 46.500 46.500H43.500Q52 27 44 7.500Z"/><text x="12" y="38.500" font-family="Liberation Serif" font-size="56" font-weight="700" font-style="italic" textLength="31" lengthAdjust="spacingAndGlyphs">x</text></g><rect x="2" y="0" width="26" height="21" fill="#333"/><path d="M4.500 2.500h5.500v5.500h-5.500zM12.300 2.500h5.500v5.500h-5.500zM20 2.500h5.500v5.500h-5.500z" fill="#999"/><path d="M4.500 10.500h5.500v2.500h-5.500zM12.300 10.500h5.500v2.500h-5.500zM20 10.500h5.500v2.500h-5.500zM4.500 16h5.500v2.500h-5.500zM12.300 16h5.500v2.500h-5.500zM20 16h5.500v2.500h-5.500z" fill="#fff"/></svg></div>
    </nav>
  </main>

  <!-- document tabs -->
  <footer class="relative flex h-[70px] shrink-0 bg-[#f0f0f0]">
    <div class="flex items-center justify-center w-[70px] bg-[#1750ae]"><svg class="w-[38px] h-[32px]" viewBox="0 0 38 32"><rect x="1" y="1.500" width="36" height="16" rx="1.500" fill="#fff"/><circle cx="22" cy="17" r="13.500" fill="#1750ae"/><path d="M7 17.500H37V32H7Z" fill="#1750ae"/><circle cx="22.500" cy="16.500" r="8.300" fill="#1750ae" stroke="#fff" stroke-width="4"/><path d="M27.500 22.500L35.500 31" stroke="#fff" stroke-width="4.500"/></svg></div>
    <div class="flex items-center w-[280px] pt-[3px] bg-white border-x-[3px] border-b-[3px] border-[#d9d9d9] pl-[21px] text-[24px]"><svg class="w-[34px] h-[36px]"><use href="#studio"/></svg><span class="ml-[6px] mt-px tracking-[0.1px]">Part Studio 1</span></div>
    <div class="flex items-center w-[280px] bg-[#eee] border-x-[3px] border-b-[3px] border-t-[5px] border-[#d9d9d9] border-t-[#b0b0b0] pl-[19px] text-[20px]"><svg class="w-[36px] h-[36px]"><use href="#assembly"/></svg><span class="ml-[7px] -mt-[2px]">Assembly 1</span></div>
    <div class="absolute right-[10px] top-0 w-[50px] h-[110px] overflow-hidden"><i class="absolute left-[50px] top-[12px] w-[40px] h-[60px] shadow-[-4px_4px_26px_8px_rgba(0,0,0,0.6)]"></i></div>
  </footer>
  <div class="flex justify-center pt-[15px]"><i class="w-[630px] h-[10px] rounded-full bg-black"></i></div>
</div>
</body>
</html>
